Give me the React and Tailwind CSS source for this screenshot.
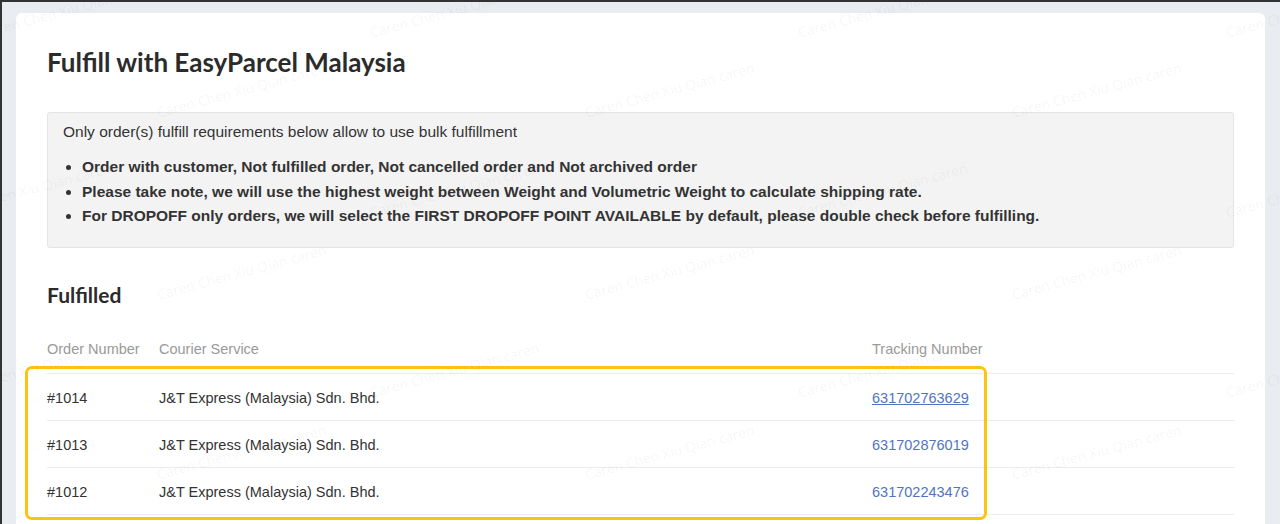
import React from 'react';

const rows = [
  { order: '#1014', courier: 'J&T Express (Malaysia) Sdn. Bhd.', tracking: '631702763629', underline: true },
  { order: '#1013', courier: 'J&T Express (Malaysia) Sdn. Bhd.', tracking: '631702876019' },
  { order: '#1012', courier: 'J&T Express (Malaysia) Sdn. Bhd.', tracking: '631702243476' },
];

const requirements = [
  'Order with customer, Not fulfilled order, Not cancelled order and Not archived order',
  'Please take note, we will use the highest weight between Weight and Volumetric Weight to calculate shipping rate.',
  'For DROPOFF only orders, we will select the FIRST DROPOFF POINT AVAILABLE by default, please double check before fulfilling.',
];

// watermark positions (left, top) of each stamp
const marks = [
  [-20, 0], [368, 0], [796, 0], [1224, 0],
  [155, 80], [583, 80], [1010, 80],
  [-60, 180], [368, 180], [796, 180], [1224, 180],
  [155, 262], [583, 262], [1010, 262],
  [-60, 360], [368, 360], [796, 360], [1224, 360],
  [155, 442], [583, 442], [1010, 442],
];

const Watermark = () => (
  <div className="pointer-events-none absolute inset-0 overflow-hidden">
    {marks.map(([x, y], i) => (
      <span
        key={i}
        className="absolute origin-left -rotate-[15deg] whitespace-nowrap text-[14px] text-black/[0.05] font-['Open_Sans',sans-serif]"
        style={{ left: x, top: y + 20 }}
      >
        Caren Chen Xiu Qian caren
      </span>
    ))}
  </div>
);

const App = () => {
  return (
    <div className="relative h-[524px] w-[1280px] overflow-hidden border-l-2 border-t-2 border-[#333] bg-[#e9ecf0] font-['Liberation_Sans',Arial,sans-serif]">
      <div className="relative ml-[14px] mr-[15px] mt-[11px] h-[600px] rounded-t-[6px] bg-white px-[31px] pt-[32px]">
        <h1 className="font-['Lato',sans-serif] text-[26px] font-bold leading-[34px] text-[#2b2b2b]">
          Fulfill with EasyParcel Malaysia
        </h1>

        <div className="mt-[33px] rounded-[3px] border border-[#e4e4e4] bg-[#f3f3f3] px-[15px] pb-[18px] pt-[8px] text-[#333]">
          <p className="text-[15.5px] leading-[22px]">
            Only order(s) fulfill requirements below allow to use bulk fulfillment
          </p>
          <ul className="mt-[12px] list-disc pl-[19px] text-[15.5px] font-bold leading-[24.5px]">
            {requirements.map((r, i) => (
              <li key={i}>{r}</li>
            ))}
          </ul>
        </div>

        <h2 className="mt-[33px] font-['Lato',sans-serif] text-[21px] font-bold leading-[28px] text-[#2b2b2b]">
          Fulfilled
        </h2>

        <table className="mt-[18px] w-full border-collapse text-[14.5px]">
          <thead>
            <tr className="h-[47px] border-b border-[#ececec] text-left text-[#9a9a9a]">
              <th className="w-[112px] font-normal">Order Number</th>
              <th className="w-[713px] font-normal">Courier Service</th>
              <th className="font-normal">Tracking Number</th>
            </tr>
          </thead>
          <tbody className="text-[#333]">
            {rows.map((row) => (
              <tr key={row.order} className="h-[47px] border-b border-[#ececec]">
                <td className="pt-[3px]">{row.order}</td>
                <td className="pt-[3px]">{row.courier}</td>
                <td className="pt-[3px]">
                  <a href="#" className={`text-[#5174c2] ${row.underline ? 'underline' : ''}`}>
                    {row.tracking}
                  </a>
                </td>
              </tr>
            ))}
          </tbody>
        </table>

        {/* highlight annotation */}
        <div className="pointer-events-none absolute left-[9px] top-[353px] h-[154px] w-[962px] rounded-[7px] border-[3px] border-[#fcc40f]" />
      </div>
      <Watermark />
    </div>
  );
};

export default App;
